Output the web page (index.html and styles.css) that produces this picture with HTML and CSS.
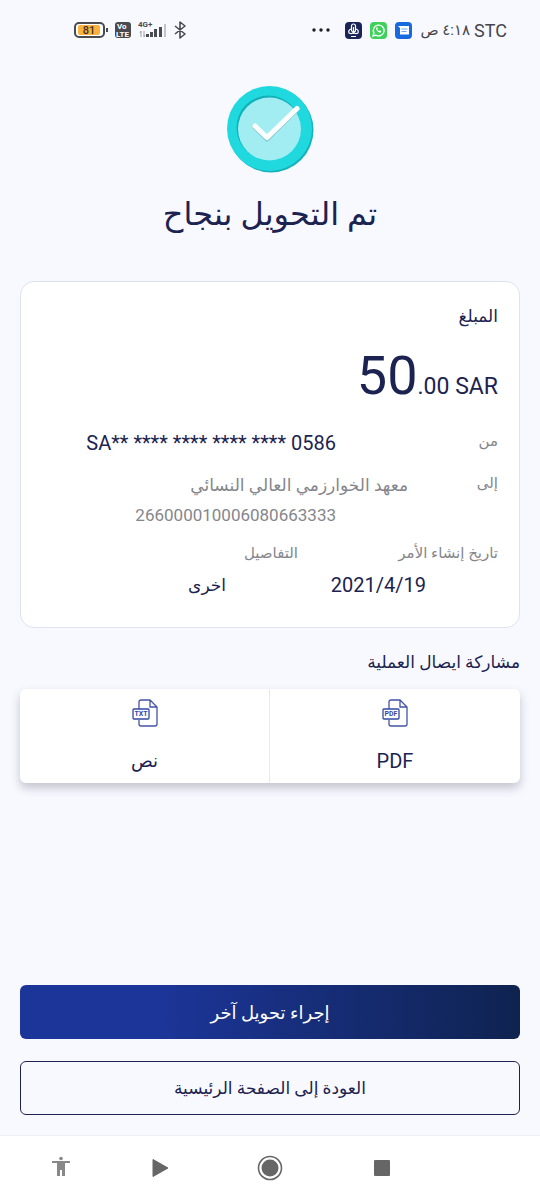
FILE: index.html
```html
<!DOCTYPE html>
<html lang="ar" dir="rtl">
<head>
<meta charset="utf-8">
<meta name="viewport" content="width=device-width, initial-scale=1">
<title>تم التحويل بنجاح</title>
<link rel="stylesheet" href="styles.css">
</head>
<body>
<div class="screen">
  <header class="status" dir="ltr">
    <div class="status-group">
      <svg class="battery" width="34" height="18" viewBox="0 0 34 18" aria-hidden="true">
        <rect x="1" y="2" width="29" height="14" rx="4" fill="#fff" stroke="#4a4b50" stroke-width="2"/>
        <rect x="4" y="4" width="22" height="10" rx="2" fill="#fbb13c"/>
        <rect x="32" y="7" width="2" height="4" fill="#4a4b50"/>
        <text x="15" y="13" text-anchor="middle" font-size="11" font-weight="500" fill="#3d3220">81</text>
      </svg>
      <svg width="18" height="18" viewBox="0 0 18 18" aria-hidden="true">
        <rect x="1" y="1" width="16" height="16" rx="3" fill="#4a4b50"/>
        <text x="3" y="8" font-size="8" font-weight="700" fill="#fff">Vo</text>
        <text x="2" y="16" font-size="8" font-weight="700" fill="#fff">LTE</text>
      </svg>
      <svg class="signal" width="30" height="20" viewBox="0 0 30 20" aria-hidden="true">
        <text x="0" y="7" font-size="8" font-weight="700" fill="#4a4b50">4G+</text>
        <path d="M3 17v-6l-1 2M6 11v6l1-2" fill="none" stroke="#a0a1a6"/>
        <path d="M8 17v-3h3v3zM12 17v-5h3v5zM16 17V9h3v8zM21 17V7h3v10z" fill="#4a4b50"/>
        <path d="M26 4h2v13h-2z" fill="#c3c4ca"/>
      </svg>
      <svg class="bluetooth" width="12" height="18" viewBox="0 0 12 18" aria-hidden="true">
        <path d="M1 5l10 8-5 4V1l5 4-10 8" fill="none" stroke="#4a4b50" stroke-width="1.600" stroke-linejoin="round"/>
      </svg>
    </div>
    <div class="status-group apps">
      <svg class="dots" width="20" height="18" viewBox="0 0 20 18" aria-hidden="true"><g fill="#1d1d22"><circle cx="3" cy="9" r="1.700"/><circle cx="10" cy="9" r="1.700"/><circle cx="17" cy="9" r="1.700"/></g></svg>
      <svg width="17" height="17" viewBox="0 0 17 17" aria-hidden="true">
        <rect width="17" height="17" rx="4" fill="#1a2456"/>
        <rect x="6.500" y="2" width="4" height="8" rx="2" fill="none" stroke="#fff" stroke-width="1.200"/>
        <path d="M6 7q-3 1-2 4 3 1.500 4.500-1 1.500 2.500 4.500 1 1-3-2-4M8.500 5v7M6 14.500h5" fill="none" stroke="#fff" stroke-width="1.200"/>
      </svg>
      <svg width="17" height="17" viewBox="0 0 17 17" aria-hidden="true">
        <rect width="17" height="17" rx="4" fill="#3fd15c"/>
        <path d="M3 14l.9-3A5.400 5.400 0 1 1 6 13.200z" fill="none" stroke="#fff" stroke-width="1.300"/>
        <path d="M6.200 5.500c-1 2 2.300 5.600 4.500 5l.6-1.300-1.500-.9-.8.700q-1.200-.5-1.700-1.700l.6-.7-.6-1.300z" fill="#fff"/>
      </svg>
      <svg width="17" height="17" viewBox="0 0 17 17" aria-hidden="true">
        <rect width="17" height="17" rx="4" fill="#1769e0"/>
        <path d="M3 4h11v8.500H5V6z" fill="#fff"/>
        <path d="M6.500 7h6M6.500 9.500h5" stroke="#6fa4f2" stroke-width="1"/>
      </svg>
      <span class="clock" dir="rtl">٤:١٨ ص</span>
      <span class="carrier">STC</span>
    </div>
  </header>

  <main class="content">
    <section class="result">
      <svg class="badge" width="88" height="88" viewBox="0 0 88 88" aria-hidden="true">
        <circle cx="45" cy="44" r="42.500" fill="#15b3ba"/>
        <circle cx="43.500" cy="42.500" r="42.500" fill="#20d9df"/>
        <circle cx="42.500" cy="41.500" r="32" fill="#12b1b7"/>
        <circle cx="43.500" cy="43" r="31.500" fill="#a2edf2"/>
        <path d="M29 41l12 12 30-30" fill="none" stroke="#8acbd2" stroke-width="5" stroke-linecap="round" stroke-linejoin="round"/>
        <path d="M29 40l12 11.500 30-29" fill="none" stroke="#fff" stroke-width="5" stroke-linecap="round" stroke-linejoin="round"/>
      </svg>
      <h1 class="title">تم التحويل بنجاح</h1>
    </section>

    <section class="card">
      <h2 class="card-label">المبلغ</h2>
      <p class="amount" dir="ltr"><span class="amount-main">50</span>.00 SAR</p>
      <dl class="parties">
        <div class="party">
          <dt class="label">من</dt>
          <dd class="value inset"><bdi dir="ltr">SA** **** **** **** **** 0586</bdi></dd>
        </div>
        <div class="party">
          <dt class="label">إلى</dt>
          <dd class="recipient">معهد الخوارزمي العالي النسائي</dd>
          <dd class="account inset">266000010006080663333</dd>
        </div>
      </dl>
      <dl class="meta">
        <div class="meta-item">
          <dt class="label">تاريخ إنشاء الأمر</dt>
          <dd class="value inset"><bdi dir="ltr">2021/4/19</bdi></dd>
        </div>
        <div class="meta-item">
          <dt class="label">التفاصيل</dt>
          <dd class="value arabic inset">اخرى</dd>
        </div>
      </dl>
    </section>

    <section class="share">
      <h2 class="share-title">مشاركة ايصال العملية</h2>
      <div class="share-box">
        <button class="share-option" type="button">
          <svg width="28" height="28" viewBox="0 0 28 28" aria-hidden="true">
            <path d="M8 10V3q0-2 2-2h9l7 7v17q0 2-2 2H10q-2 0-2-2v-4M19 1v7h7" fill="none" stroke="#4354a5" stroke-width="1.300"/>
            <rect x="2" y="10" width="16" height="10" rx="1" fill="#fff" stroke="#3448a0" stroke-width="1.300"/>
            <text x="10" y="17" text-anchor="middle" font-size="7" font-weight="700" fill="#3448a0">PDF</text>
          </svg>
          <span class="share-text">PDF</span>
        </button>
        <button class="share-option" type="button">
          <svg width="28" height="28" viewBox="0 0 28 28" aria-hidden="true">
            <path d="M8 10V3q0-2 2-2h9l7 7v17q0 2-2 2H10q-2 0-2-2v-4M19 1v7h7" fill="none" stroke="#4354a5" stroke-width="1.300"/>
            <rect x="2" y="10" width="16" height="10" rx="1" fill="#fff" stroke="#3448a0" stroke-width="1.300"/>
            <text x="10" y="17" text-anchor="middle" font-size="7" font-weight="700" fill="#3448a0">TXT</text>
          </svg>
          <span class="share-text arabic">نص</span>
        </button>
      </div>
    </section>

    <div class="actions">
      <button class="action primary" type="button">إجراء تحويل آخر</button>
      <button class="action secondary" type="button">العودة إلى الصفحة الرئيسية</button>
    </div>
  </main>

  <nav class="system-nav" dir="ltr" aria-label="النظام">
    <button class="nav-button" type="button" aria-label="إمكانية الوصول">
      <svg width="24" height="24" viewBox="0 0 24 24"><circle cx="12" cy="2.500" r="1.800" fill="#888"/><path d="M3 5h18v2h-5v13h-3v-6h-2v6H8V7H3z" fill="#888"/></svg>
    </button>
    <button class="nav-button" type="button" aria-label="رجوع">
      <svg width="24" height="24" viewBox="0 0 24 24"><path d="M5 3.500l15 8.500-15 8.500z" fill="#666" stroke="#666" stroke-linejoin="round"/></svg>
    </button>
    <button class="nav-button" type="button" aria-label="الرئيسية">
      <svg width="26" height="26" viewBox="0 0 26 26"><circle cx="13" cy="13" r="11.500" fill="none" stroke="#666" stroke-width="1.600"/><circle cx="13" cy="13" r="8.500" fill="#666"/></svg>
    </button>
    <button class="nav-button" type="button" aria-label="التطبيقات الأخيرة">
      <svg width="24" height="24" viewBox="0 0 24 24"><rect x="4" y="4" width="16" height="16" rx="1" fill="#666"/></svg>
    </button>
  </nav>
</div>
</body>
</html>
```
FILE: styles.css
```css
*, *::before, *::after { box-sizing: border-box; }

body {
  margin: 0;
  background: #f8f9ff;
  color: #1c2350;
  font-family: Roboto, "DejaVu Sans", sans-serif;
}

h1, h2, p, dl, dd { margin: 0; font-weight: 400; }
button { font: inherit; color: inherit; border: 0; padding: 0; background: none; cursor: pointer; }
svg { display: block; flex: none; }

.screen { min-height: 100vh; display: flex; flex-direction: column; }

.status {
  display: flex;
  justify-content: space-between;
  align-items: center;
  height: 60px;
  padding: 0 33px 0 74px;
  color: #45464c;
}
.status-group { display: flex; align-items: center; gap: 6px; }
.apps { gap: 8px; }
.dots { margin-right: 6px; }
.clock { font-size: 15px; white-space: nowrap; }
.carrier { font-size: 18px; margin-left: -4px; }

.content {
  flex: 1;
  display: flex;
  flex-direction: column;
  padding: 26px 20px 20px;
}

.result { display: flex; flex-direction: column; align-items: center; }
.title { margin-top: 14px; font-size: 32px; line-height: 52px; }

.card {
  margin-top: 41px;
  padding: 20px 21px 28px;
  background: #fff;
  border: 1px solid #dfe3ef;
  border-radius: 14px;
}
.card-label { font-size: 17px; line-height: 28px; }
.amount { margin-top: 14px; font-size: 23px; line-height: 64px; text-align: right; }
.amount-main { font-size: 54px; }

.parties { margin-top: 10px; display: grid; gap: 14px; }
.party { display: grid; grid-template-columns: 90px 1fr; row-gap: 4px; }
.party dd { grid-column: 2; }
.label { color: #85868c; font-size: 15px; line-height: 24px; }
.value { font-size: 20px; line-height: 28px; }
.value.arabic { font-size: 17px; }
.inset { padding-inline-start: 72px; }
.recipient { color: #85868c; font-size: 17px; line-height: 28px; }
.account { color: #85868c; font-size: 17px; line-height: 24px; }

.meta { margin-top: 14px; display: grid; grid-template-columns: 200px 1fr; }
.meta .value { margin-top: 6px; }

.share-title { margin-top: 20px; font-size: 17px; line-height: 28px; }
.share-box {
  margin-top: 13px;
  display: grid;
  grid-template-columns: 1fr 1fr;
  background: #fff;
  border-radius: 6px;
  box-shadow: 0 5px 10px rgba(40, 42, 55, 0.25);
}
.share-option {
  display: flex;
  flex-direction: column;
  align-items: center;
  gap: 20px;
  padding: 10px 0 8px;
}
.share-option + .share-option { border-inline-start: 1px solid #e8e9ef; }
.share-text { font-size: 20px; line-height: 28px; }
.share-text.arabic { font-size: 18px; }

.actions { margin-top: auto; display: grid; gap: 22px; }
.action { height: 54px; border-radius: 6px; }
.primary { font-size: 18px; color: #fff; background: linear-gradient(90deg, #1c3598 28%, #0f2350); }
.secondary { font-size: 17px; border: 1px solid #1c2350; }

.system-nav {
  display: grid;
  grid-template-columns: 94fr 104fr 116fr 108fr;
  height: 65px;
  padding: 0 104px 0 14px;
  background: #fff;
  border-top: 1px solid #eeeff3;
}
.nav-button { display: flex; align-items: center; justify-content: center; }
```
